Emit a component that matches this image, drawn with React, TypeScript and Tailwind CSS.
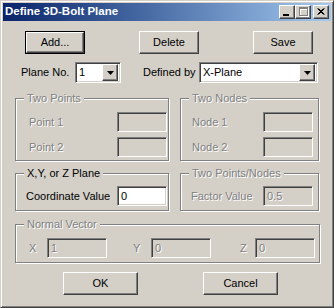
import React from 'react';

const font = { fontFamily: '"Liberation Sans", Arial, sans-serif' };

const raised =
  'border border-t-white border-l-white border-r-[#404040] border-b-[#404040] shadow-[inset_-1px_-1px_0_#808080,inset_1px_1px_0_#d4d0c8]';
const sunken =
  'border border-t-[#808080] border-l-[#808080] border-r-white border-b-white shadow-[inset_1px_1px_0_#404040,inset_-1px_-1px_0_#d4d0c8]';
const disabledText = 'text-[#808080] [text-shadow:1px_1px_0_#fff]';

function Button({ label, isDefault = false, className = '' }: { label: string; isDefault?: boolean; className?: string }) {
  if (isDefault) {
    return (
      <div className={`border border-black ${className}`}>
        <div className={`${raised} w-full h-full flex items-center justify-center text-[11px] text-black`}>{label}</div>
      </div>
    );
  }
  return (
    <div className={`${raised} flex items-center justify-center text-[11px] text-black ${className}`}>{label}</div>
  );
}

function Field({ value = '', enabled = false, className = '' }: { value?: string; enabled?: boolean; className?: string }) {
  return (
    <div
      className={`${sunken} h-[20px] flex items-center pl-[3px] text-[11px] ${
        enabled ? 'bg-white text-black' : `bg-[#d4d0c8] ${disabledText}`
      } ${className}`}
    >
      {value}
    </div>
  );
}

function Combo({ value, className = '' }: { value: string; className?: string }) {
  return (
    <div className={`${sunken} h-[21px] bg-white flex items-center pr-[2px] ${className}`}>
      <span className="flex-1 pl-[3px] text-[11px] text-black">{value}</span>
      <div className={`${raised} w-[16px] h-[17px] bg-[#d4d0c8] flex items-center justify-center`}>
        <svg width="7" height="4" viewBox="0 0 7 4">
          <path d="M0 0h7L3.5 4z" fill="#000" />
        </svg>
      </div>
    </div>
  );
}

function Group({
  title,
  enabled = false,
  className = '',
  children,
}: {
  title: string;
  enabled?: boolean;
  className?: string;
  children: React.ReactNode;
}) {
  return (
    <div className={`relative border border-[#808080] shadow-[inset_1px_1px_0_#fff,1px_1px_0_#fff] ${className}`}>
      <span
        className={`absolute left-[8px] -top-[8px] px-[3px] bg-[#d4d0c8] text-[11px] leading-[14px] ${
          enabled ? 'text-black' : disabledText
        }`}
      >
        {title}
      </span>
      {children}
    </div>
  );
}

function CaptionButton({ children, className = '' }: { children: React.ReactNode; className?: string }) {
  return <div className={`${raised} w-[16px] h-[14px] bg-[#d4d0c8] relative ${className}`}>{children}</div>;
}

export default function App() {
  return (
    <div style={font} className="w-[334px] h-[308px] bg-[#d4d0c8] overflow-hidden">
      <div className="w-full h-full border border-t-[#d4d0c8] border-l-[#d4d0c8] border-r-[#404040] border-b-[#404040] shadow-[inset_1px_1px_0_#fff,inset_-1px_-1px_0_#808080] p-[2px] flex flex-col">
        {/* Title bar */}
        <div className="h-[18px] bg-gradient-to-r from-[#0a246a] to-[#a6caf0] flex items-center pl-[2px] pr-[2px]">
          <span className="flex-1 text-white font-bold text-[11.5px] leading-none">Define 3D-Bolt Plane</span>
          <CaptionButton>
            <svg className="absolute left-0 top-0" width="14" height="12" viewBox="0 0 14 12">
              <rect x="3" y="8" width="6" height="2" fill="#000" />
            </svg>
          </CaptionButton>
          <CaptionButton>
            <svg className="absolute left-0 top-0" width="14" height="12" viewBox="0 0 14 12">
              <g transform="translate(1 1)" fill="none" stroke="#fff">
                <rect x="3.5" y="1.5" width="8" height="8" />
                <path d="M3 2.5h9" />
              </g>
              <g fill="none" stroke="#808080">
                <rect x="3.5" y="1.5" width="8" height="8" />
                <path d="M3 2.5h9" />
              </g>
            </svg>
          </CaptionButton>
          <CaptionButton className="ml-[2px]">
            <svg className="absolute left-0 top-0" width="14" height="12" viewBox="0 0 14 12">
              <path d="M3.5 2.5l6 6M9.5 2.5l-6 6M4.5 2.5l6 6M10.5 2.5l-6 6" stroke="#000" strokeWidth="1" fill="none" />
            </svg>
          </CaptionButton>
        </div>

        {/* Body */}
        <div className="flex flex-col">
          <div className="flex mt-[10px] ml-[22px] gap-[54px]">
            <Button label="Add..." isDefault className="w-[60px] h-[23px]" />
            <Button label="Delete" className="w-[60px] h-[23px]" />
            <Button label="Save" className="w-[60px] h-[23px]" />
          </div>

          <div className="flex items-center mt-[8px] text-[11px] text-black">
            <span className="ml-[18px] w-[54px]">Plane No.</span>
            <Combo value="1" className="w-[46px]" />
            <span className="ml-[22px] w-[56px]">Defined by</span>
            <Combo value="X-Plane" className="w-[119px]" />
          </div>

          <div className="flex mt-[15px] ml-[12px]">
            <Group title="Two Points" className="w-[154px] h-[63px] pt-[13px] flex flex-col gap-[5px]">
              <div className="flex items-center">
                <span className={`pl-[13px] text-[11px] ${disabledText}`}>Point 1</span>
                <Field className="ml-auto mr-[1px] w-[50px]" />
              </div>
              <div className="flex items-center">
                <span className={`pl-[13px] text-[11px] ${disabledText}`}>Point 2</span>
                <Field className="ml-auto mr-[1px] w-[50px]" />
              </div>
            </Group>
            <Group title="Two Nodes" className="ml-[11px] w-[139px] h-[63px] pt-[13px] flex flex-col gap-[5px]">
              <div className="flex items-center">
                <span className={`pl-[11px] text-[11px] ${disabledText}`}>Node 1</span>
                <Field className="ml-auto mr-[5px] w-[50px]" />
              </div>
              <div className="flex items-center">
                <span className={`pl-[11px] text-[11px] ${disabledText}`}>Node 2</span>
                <Field className="ml-auto mr-[5px] w-[50px]" />
              </div>
            </Group>
          </div>

          <div className="flex mt-[12px] ml-[12px]">
            <Group title="X,Y, or Z Plane" enabled className="w-[154px] h-[38px] pt-[12px]">
              <div className="flex items-center">
                <span className="pl-[10px] text-[11px] text-black">Coordinate Value</span>
                <Field value="0" enabled className="ml-auto mr-[1px] w-[50px]" />
              </div>
            </Group>
            <Group title="Two Points/Nodes" className="ml-[11px] w-[139px] h-[38px] pt-[12px]">
              <div className="flex items-center">
                <span className={`pl-[10px] text-[11px] ${disabledText}`}>Factor Value</span>
                <Field value="0.5" className="ml-auto mr-[5px] w-[50px]" />
              </div>
            </Group>
          </div>

          <div className="flex mt-[13px] ml-[12px]">
            <Group title="Normal Vector" className="w-[305px] h-[39px] pt-[13px]">
              <div className="flex items-center text-[11px]">
                <span className={`ml-[13px] w-[18px] ${disabledText}`}>X</span>
                <Field value="1" className="w-[60px]" />
                <span className={`ml-[26px] w-[18px] ${disabledText}`}>Y</span>
                <Field value="0" className="w-[60px]" />
                <span className={`ml-[29px] w-[15px] ${disabledText}`}>Z</span>
                <Field value="0" className="w-[60px]" />
              </div>
            </Group>
          </div>

          <div className="flex mt-[9px] ml-[60px] gap-[65px]">
            <Button label="OK" className="w-[75px] h-[23px]" />
            <Button label="Cancel" className="w-[75px] h-[23px]" />
          </div>
        </div>
      </div>
    </div>
  );
}
